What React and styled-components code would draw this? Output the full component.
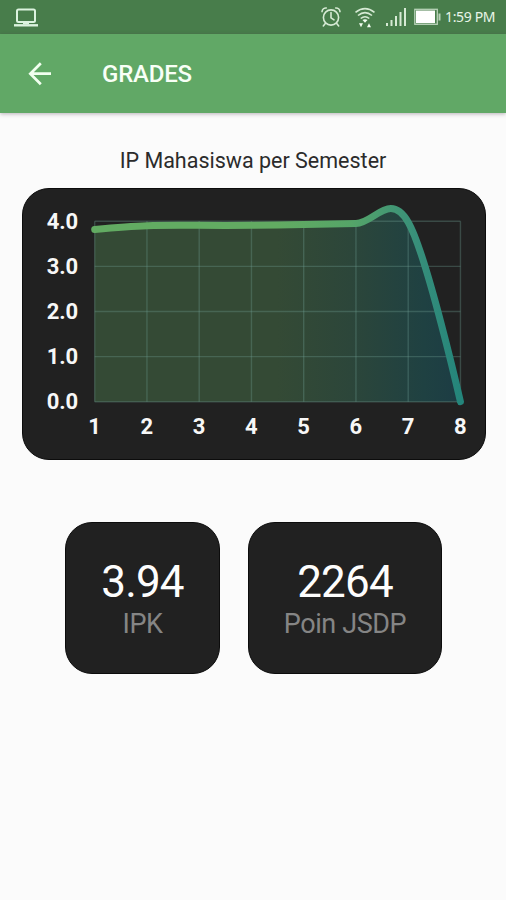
import React from 'react'
import styled, { createGlobalStyle } from 'styled-components'

const GlobalStyle = createGlobalStyle`
    body {
        margin: 0;
        background: #fbfbfb;
        font-family: Roboto, sans-serif;
    }
`;

const Screen = styled.div`
    width: 506px;
    height: 900px;
    overflow: hidden;
    display: flex;
    flex-direction: column;
    background: #fbfbfb;
`;

const StatusBar = styled.div`
    height: 34px;
    flex: none;
    box-sizing: border-box;
    padding: 0 10px 0 13px;
    display: flex;
    align-items: center;
    background: #487d4b;
`;

const StatusIcon = styled.svg`
    flex: none;
    display: block;
    margin-left: ${props => props.$gap || 0}px;
    overflow: visible;
`;

const Spacer = styled.div`
    flex: 1;
`;

const Clock = styled.span`
    width: 51px;
    margin-left: 4px;
    font: 14px/36px "Noto Sans", sans-serif;
    letter-spacing: -0.35px;
    white-space: nowrap;
    color: #e9f5e8;
`;

const AppBar = styled.header`
    height: 79px;
    flex: none;
    box-sizing: border-box;
    padding-left: 24px;
    display: flex;
    align-items: center;
    background: #61a866;
    box-shadow: 0 1px 4px rgba(60, 40, 60, 0.35);
`;

const BackButton = styled.button`
    width: 32px;
    height: 32px;
    padding: 0;
    border: 0;
    background: none;
`;

const Title = styled.h1`
    margin: 0 0 0 46px;
    font-size: 24px;
    font-weight: 500;
    letter-spacing: -0.2px;
    color: #f8fff6;
`;

const ChartTitle = styled.h2`
    margin: 35px 0 14px;
    font-size: 21.5px;
    line-height: 26px;
    font-weight: 400;
    letter-spacing: 0;
    text-align: center;
    color: #2b2b2b;
`;

const Card = styled.div`
    box-sizing: border-box;
    background: #212121;
    border: 1px solid #0c0c0c;
    border-radius: 27px;
`;

const ChartCard = styled(Card)`
    width: 464px;
    height: 272px;
    margin-left: 22px;
    flex: none;
`;

const Chart = styled.svg`
    display: block;
    overflow: visible;
`;

const AxisLabel = styled.text`
    font-size: 22px;
    font-weight: 700;
    letter-spacing: -0.2px;
    fill: #f7f7f7;
    text-anchor: middle;
`;

const Stats = styled.div`
    display: flex;
    gap: 28px;
    margin: 62px 0 0 65px;
`;

const StatCard = styled(Card)`
    width: ${props => props.$width}px;
    height: 152px;
    padding-top: 33px;
    text-align: center;
`;

const StatValue = styled.div`
    font-size: 44px;
    line-height: 53px;
    letter-spacing: -0.8px;
    color: #fdfdfd;
`;

const StatLabel = styled.div`
    font-size: 27px;
    line-height: 30px;
    letter-spacing: -0.4px;
    color: #858585;
`;

const semesters = [3.82, 3.9, 3.91, 3.91, 3.93, 3.95, 3.98, 0];
const LEFT = 71.7;
const TOP = 32.3;
const STEP_X = 52.25;
const STEP_Y = 45.1;
const BOTTOM = TOP + STEP_Y * 4;
const SMOOTHNESS = 0.35;

const points = semesters.map((ip, i) => [LEFT + i * STEP_X, BOTTOM - ip * STEP_Y]);

function curve() {
    let d = `M${points[0]}`;
    let tx = 0;
    let ty = 0;
    for (let i = 1; i < points.length; i++) {
        const prev = points[i - 1];
        const cur = points[i];
        const next = points[i + 1] || cur;
        const c1 = [prev[0] + tx, prev[1] + ty];
        tx = ((next[0] - prev[0]) / 2) * SMOOTHNESS;
        ty = ((next[1] - prev[1]) / 2) * SMOOTHNESS;
        if (i === points.length - 1) {
            tx = 0;
            ty = 0;
        }
        d += ` C${c1} ${[cur[0] - tx, cur[1] - ty]} ${cur}`;
    }
    return d;
}

function GradesChart() {
    const line = curve();
    const right = LEFT + STEP_X * 7;
    return (
        <Chart width="462" height="270">
            <defs>
                <linearGradient id="line" gradientUnits="userSpaceOnUse" x1={LEFT} x2={right} y1="0" y2="0">
                    <stop offset="0.5" stopColor="#62ab62" />
                    <stop offset="0.7" stopColor="#55a568" />
                    <stop offset="0.88" stopColor="#388f7a" />
                    <stop offset="1" stopColor="#24857b" />
                </linearGradient>
                <linearGradient id="area" gradientUnits="userSpaceOnUse" x1={LEFT} x2={right} y1="0" y2="0">
                    <stop offset="0.5" stopColor="#344a35" />
                    <stop offset="0.7" stopColor="#2c463a" />
                    <stop offset="0.9" stopColor="#1f4142" />
                    <stop offset="1" stopColor="#1c3c44" />
                </linearGradient>
            </defs>
            <path d={`${line} L${LEFT},${BOTTOM} Z`} fill="url(#area)" />
            <g stroke="#6b9a90" strokeOpacity="0.34" strokeWidth="1.4">
                {[0, 1, 2, 3, 4].map(i => (
                    <line key={i} x1={LEFT} x2={right} y1={TOP + i * STEP_Y} y2={TOP + i * STEP_Y} />
                ))}
                {points.map(([x], i) => <line key={i} x1={x} x2={x} y1={TOP} y2={BOTTOM} />)}
            </g>
            <path d={line} fill="none" stroke="url(#line)" strokeWidth="7" strokeLinecap="round" />
            {['4.0', '3.0', '2.0', '1.0', '0.0'].map((label, i) => (
                <AxisLabel key={label} x="39.3" y={TOP + i * STEP_Y + 7.7}>{label}</AxisLabel>
            ))}
            {points.map(([x], i) => <AxisLabel key={i} x={x - 0.3} y="245">{i + 1}</AxisLabel>)}
        </Chart>
    );
}

export default function App() {
    return (
        <>
            <GlobalStyle />
            <Screen>
                <StatusBar>
                    {/* laptop */}
                    <StatusIcon width="26" height="20" fill="none" stroke="#dcf3df" strokeWidth="2">
                        <rect x="4" y="2.5" width="18" height="12.5" rx="1.5" />
                        <path d="M1 18.3H25" strokeWidth="2.4" />
                        <path d="M10 16.5H16" strokeWidth="1.4" />
                    </StatusIcon>
                    <Spacer />
                    {/* alarm */}
                    <StatusIcon width="20" height="20" fill="none" stroke="#d6ead4" strokeWidth="1.6" strokeLinecap="round">
                        <circle cx="10" cy="10.5" r="7.6" />
                        <path d="M10 5.5v5.3l3 2M1 4.6A4 4 0 0 1 5.3 1M14.7 1A4 4 0 0 1 19 4.6M4.3 16.6L2.3 19M15.7 16.6l2 2.4" />
                    </StatusIcon>
                    {/* wifi */}
                    <StatusIcon $gap={14} width="20" height="22" fill="none" stroke="#d6ead4" strokeWidth="1.6">
                        <path d="M.5 6.3Q10 -1 19.5 6.3M3 9.5Q10 3.8 17 9.5M5.700 12.500Q10 9 14.300 12.500" />
                        <path d="M7.500 14Q10 12.500 12.500 14L10 16.800ZM4 17.300h4l-2 4zM12 21.300h4l-2-4z" fill="#f4fff2" stroke="none" />
                    </StatusIcon>
                    {/* signal */}
                    <StatusIcon $gap={11} width="20" height="20" fill="#d6ead4">
                        <rect y="16" width="2" height="3" />
                        <rect x="4.5" y="13" width="2" height="6" />
                        <rect x="9" y="9" width="2" height="10" />
                        <rect x="13.5" y="5" width="2" height="14" />
                        <rect x="18" y="1" width="2" height="18" />
                    </StatusIcon>
                    {/* battery */}
                    <StatusIcon $gap={8} width="27" height="18">
                        <rect x=".8" y="1.3" width="22.5" height="15" fill="none" stroke="#b9d3b9" strokeWidth="1.3" />
                        <rect x="2" y="2.5" width="19" height="12.6" fill="#fff" />
                        <path d="M24.5 5.5h2v7h-2z" fill="#b9d3b9" />
                    </StatusIcon>
                    <Clock>1:59 PM</Clock>
                </StatusBar>
                <AppBar>
                    <BackButton aria-label="Back">
                        <svg width="32" height="32" fill="none" stroke="#f2fff0" strokeWidth="2.7">
                            <path d="M27 15.7H6.5M16.800 5.200L6.300 15.700L16.800 26.200" />
                        </svg>
                    </BackButton>
                    <Title>GRADES</Title>
                </AppBar>
                <ChartTitle>IP Mahasiswa per Semester</ChartTitle>
                <ChartCard>
                    <GradesChart />
                </ChartCard>
                <Stats>
                    <StatCard $width={155}>
                        <StatValue>3.94</StatValue>
                        <StatLabel>IPK</StatLabel>
                    </StatCard>
                    <StatCard $width={194}>
                        <StatValue>2264</StatValue>
                        <StatLabel>Poin JSDP</StatLabel>
                    </StatCard>
                </Stats>
            </Screen>
        </>
    );
}
